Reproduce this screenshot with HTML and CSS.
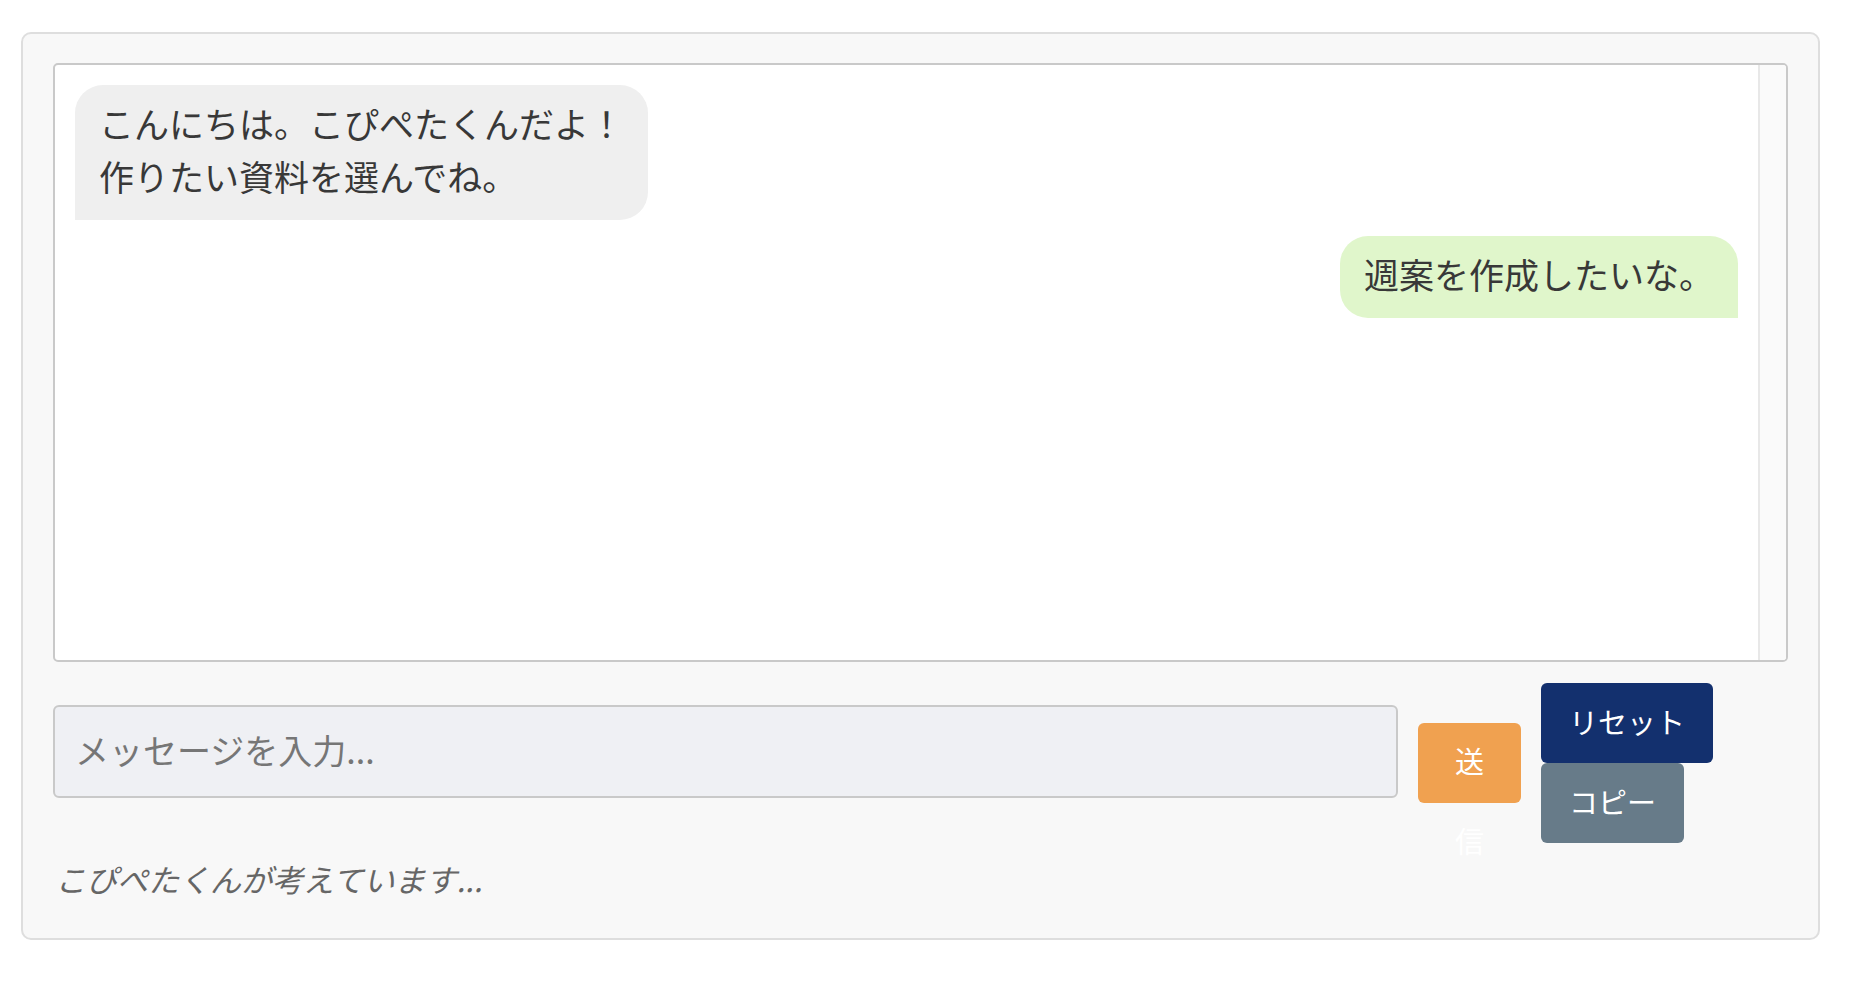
FILE: index.html
```html
<!DOCTYPE html>
<html lang="ja">
<head>
<meta charset="utf-8">
<title>こぴぺたくん</title>
<link rel="stylesheet" href="styles.css">
</head>
<body>
<div class="panel">
  <div class="chat">
    <div class="messages">
      <div class="msg bot">こんにちは。こぴぺたくんだよ！<br>作りたい資料を選んでね。</div>
      <div class="msg user">週案を作成したいな。</div>
    </div>
    <div class="scroll-track"></div>
  </div>
  <div class="controls">
    <input class="input" type="text" placeholder="メッセージを入力...">
    <button class="btn send"><span class="send-label">送信</span></button>
    <div class="btn-col">
      <button class="btn reset">リセット</button>
      <button class="btn copy">コピー</button>
    </div>
  </div>
  <div class="thinking">こぴぺたくんが考えています...</div>
</div>
</body>
</html>
```

FILE: styles.css
```css
html, body {
  margin: 0;
  padding: 0;
  background: #ffffff;
}

body {
  font-family: "Noto Sans CJK JP", "Noto Sans", sans-serif;
  color: #333333;
}

.panel {
  margin: 32px 36px 0 21px;
  padding: 29px 30px 36px 30px;
  background: #f8f8f8;
  border: 2px solid #dedede;
  border-radius: 10px;
}

.chat {
  box-sizing: border-box;
  height: 599px;
  background: #ffffff;
  border: 2px solid #c9c9c9;
  border-radius: 5px;
  display: flex;
  overflow: hidden;
}

.messages {
  flex: 1;
  min-width: 0;
  padding: 20px;
  display: flex;
  flex-direction: column;
  gap: 16px;
  overflow: hidden;
}

.scroll-track {
  flex: none;
  width: 26px;
  background: #fafafa;
  border-left: 2px solid #e8e8e8;
}

.msg {
  font-size: 35px;
  line-height: 53px;
  padding: 11px 24px 18px 24px;
  color: #383838;
  white-space: nowrap;
}

.bot {
  align-self: flex-start;
  background: #efefef;
  border-radius: 28px 28px 28px 0;
}

.user {
  align-self: flex-end;
  background: #e0f6cb;
  border-radius: 28px 28px 0 28px;
}

.controls {
  margin-top: 21px;
  display: flex;
  align-items: center;
  gap: 20px;
}

.input {
  flex: 1;
  min-width: 0;
  box-sizing: border-box;
  height: 93px;
  margin: 0 0 23px 0;
  padding: 0 20px 5px 20px;
  font-family: "Noto Sans CJK JP", "Noto Sans", sans-serif;
  font-size: 34px;
  color: #333333;
  background: #eff0f4;
  border: 2px solid #c9c9c9;
  border-radius: 6px;
  outline: none;
}

.input::placeholder {
  color: #767676;
}

.btn {
  box-sizing: border-box;
  height: 80px;
  border: none;
  border-radius: 6px;
  color: #ffffff;
  font-family: "Noto Sans CJK JP", "Noto Sans", sans-serif;
  font-size: 29px;
  cursor: pointer;
  margin: 0;
}

.send {
  width: 103px;
  flex: none;
  padding: 0 28px;
  line-height: 80px;
  background: #f0a150;
  overflow: visible;
  display: flex;
  align-items: flex-start;
  justify-content: center;
  text-align: center;
}

.send-label {
  display: block;
  margin-top: -3px;
}

.btn-col {
  flex: none;
  width: 247px;
  display: flex;
  flex-direction: column;
  align-items: flex-start;
}

.reset,
.copy {
  padding: 0 28px 5px 28px;
  display: flex;
  align-items: center;
  justify-content: center;
}

.reset {
  background: #13306e;
}

.copy {
  background: #677b89;
}

.thinking {
  margin-top: 12px;
  padding-left: 2px;
  font-size: 31px;
  line-height: 47px;
  font-style: italic;
  color: #666666;
}
```
